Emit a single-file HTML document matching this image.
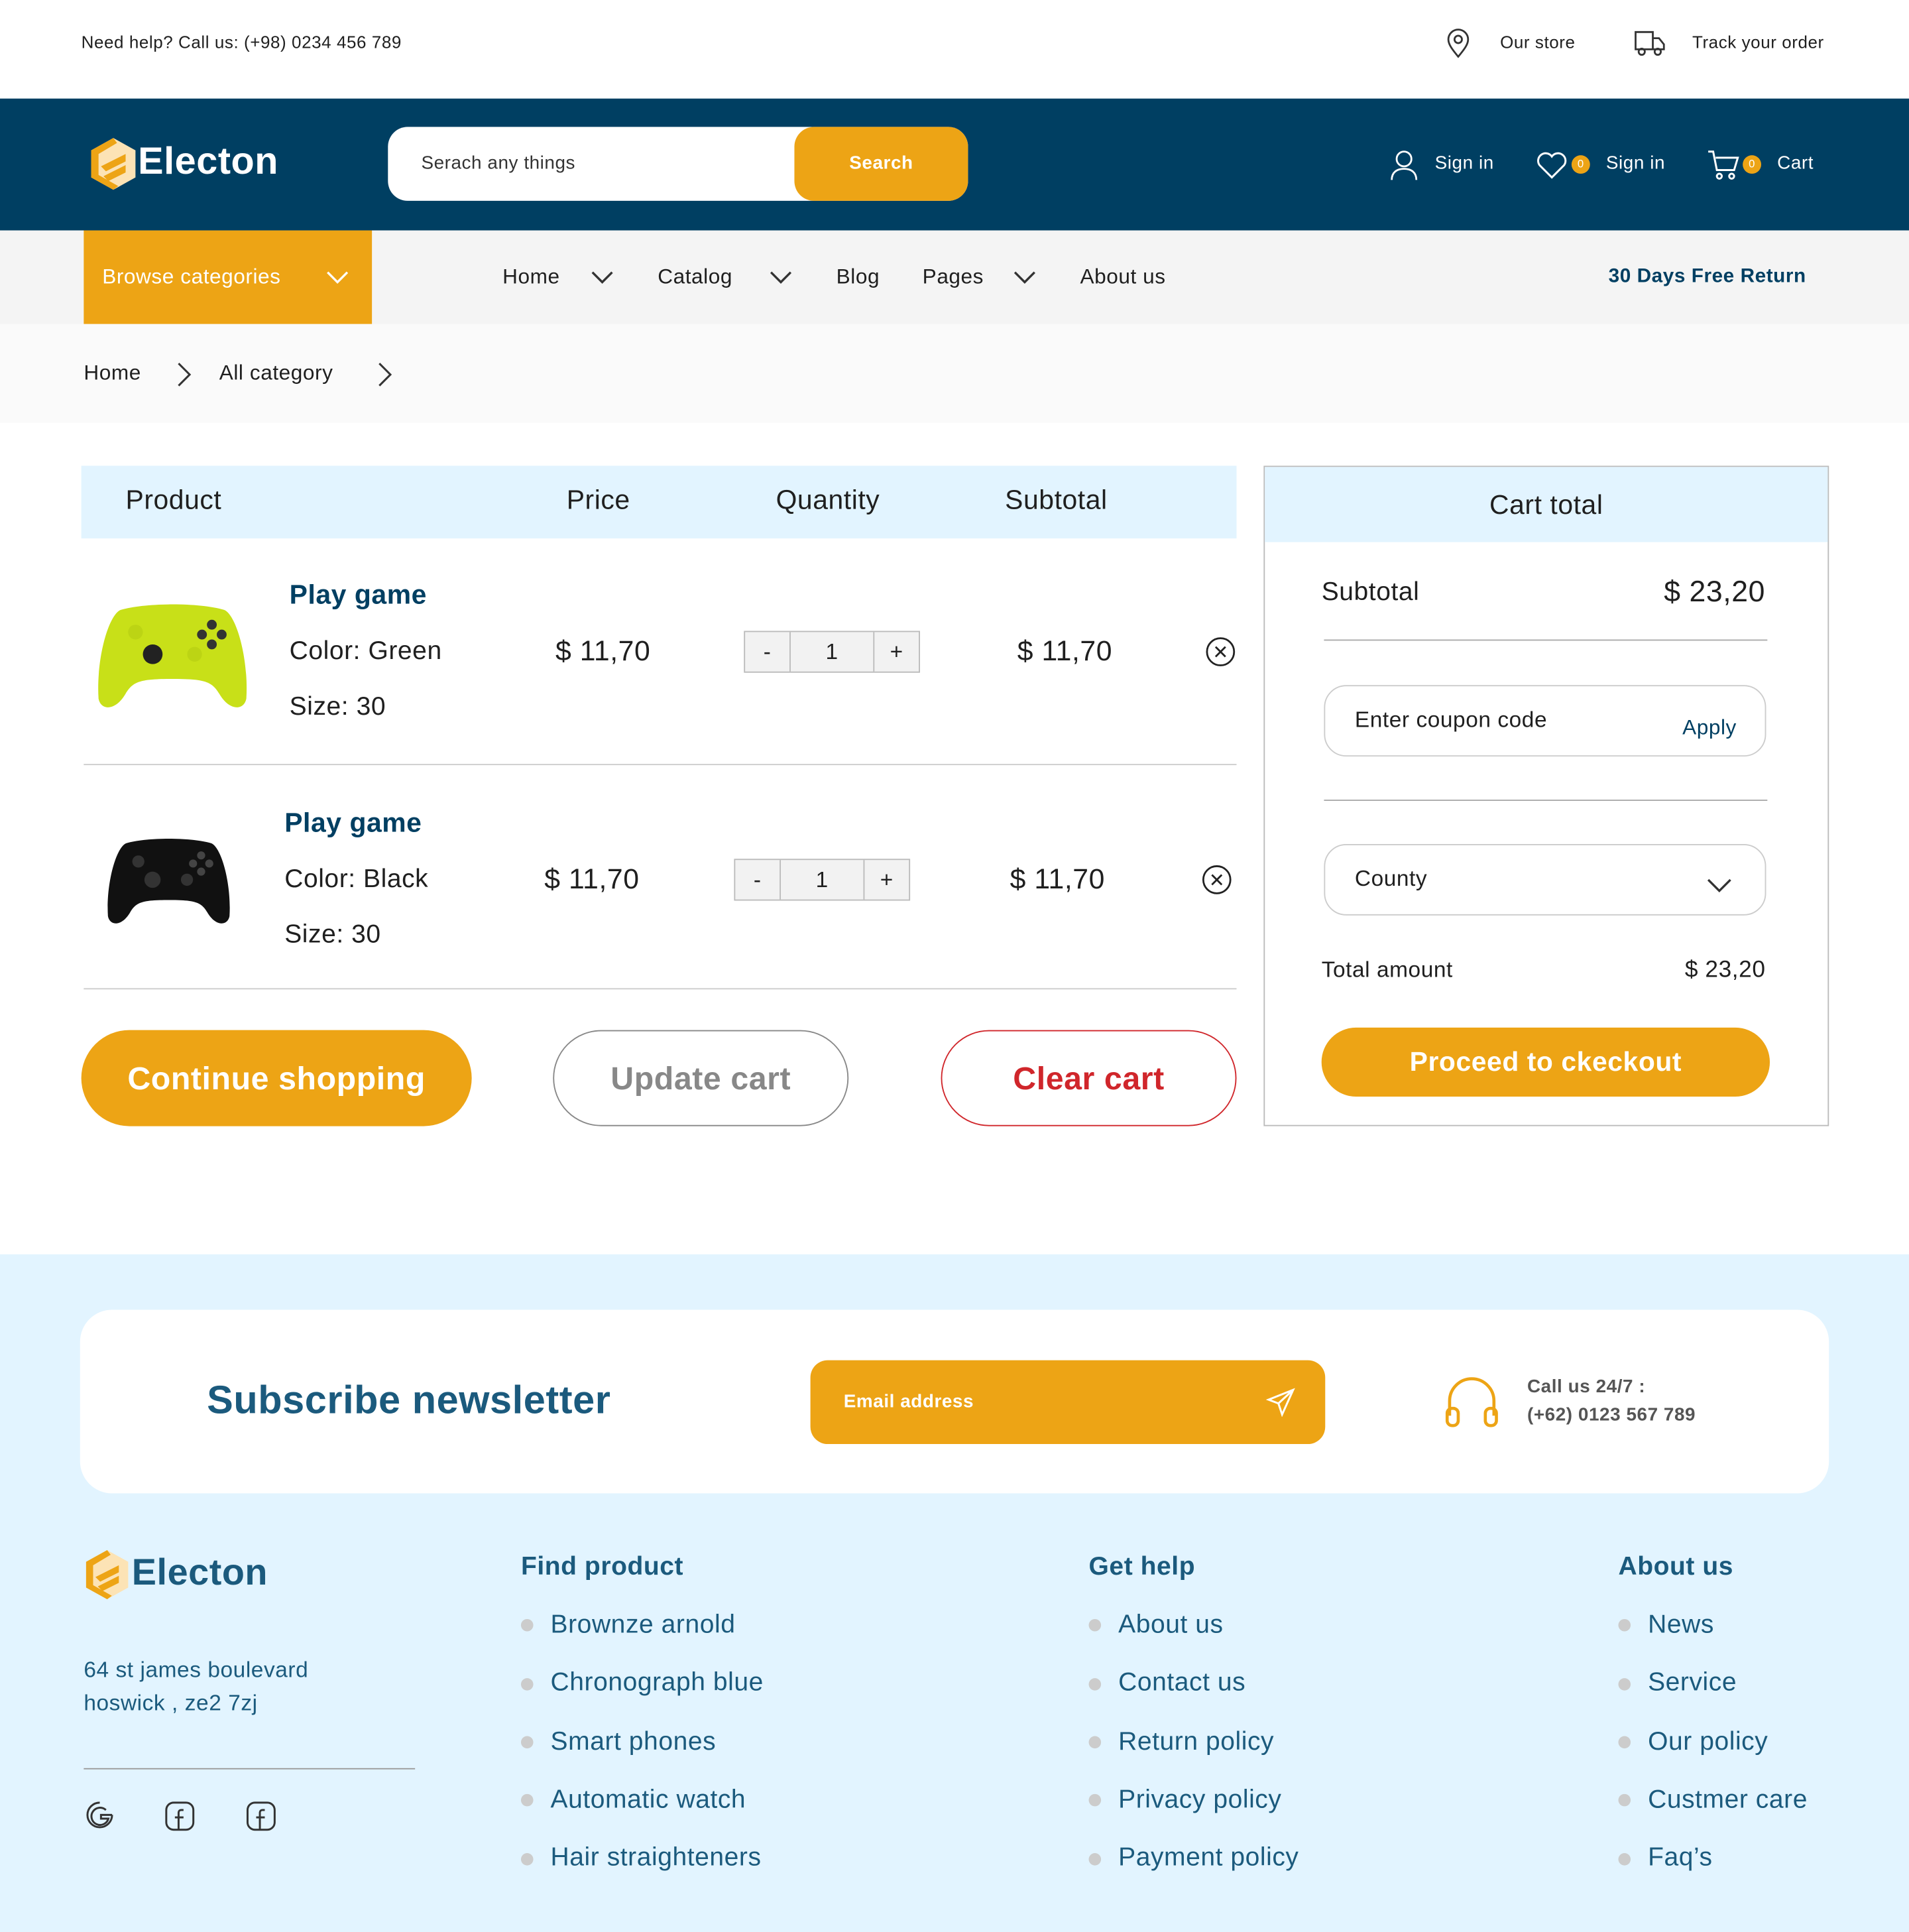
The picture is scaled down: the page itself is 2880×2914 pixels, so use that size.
<!DOCTYPE html>
<html><head><meta charset="utf-8"><style>
*{margin:0;padding:0;box-sizing:border-box}
html,body{width:2880px;height:2914px;overflow:hidden;background:#fff}
#w{position:absolute;left:0;top:0;width:1550px;height:1568px;transform:scale(1.85806,1.8584);transform-origin:0 0;font-family:"Liberation Sans",sans-serif;color:#1f1f1f;letter-spacing:0.3px}
.a{position:absolute;white-space:nowrap}
.navy{color:#003F62}
svg{position:absolute}
.d{display:inline-block;width:10px;height:10px;border-radius:50%;background:#ccc;margin-right:14px;vertical-align:middle}
</style></head><body><div id="w">
<div class="a" style="left:66px;top:26px;font-size:14px">Need help? Call us: (+98) 0234 456 789</div>
<svg style="left:1172px;top:22px" width="24" height="26" viewBox="0 0 24 26" fill="none" stroke="#333" stroke-width="1.5"><path d="M12 24c5-6 8-10 8-14a8 8 0 0 0-16 0c0 4 3 8 8 14z"/><circle cx="12" cy="10" r="3"/></svg>
<div class="a" style="left:1218px;top:26px;font-size:14px">Our store</div>
<svg style="left:1326px;top:22px" width="28" height="26" viewBox="0 0 28 26" fill="none" stroke="#333" stroke-width="1.5"><path d="M2 4h14v14H2zM16 9h5l4 5v4h-9"/><circle cx="7" cy="20" r="2.5"/><circle cx="20" cy="20" r="2.5"/></svg>
<div class="a" style="left:1374px;top:26px;font-size:14px">Track your order</div>
<div class="a" style="left:0;top:80px;width:1550px;height:107px;background:#003F62"></div>
<svg style="left:72px;top:111px" width="40" height="44" viewBox="0 0 40 44"><path d="M20 1 38 11v22L20 43 2 33V11z" fill="#FCE3B5"/><path d="M20 1 2 11v22l18 10 4-3-16-9V14l15-9z" fill="#EDA415"/><path d="M10 24 30 14v6L14 28z M12 32l18-9v6l-14 7z" fill="#EDA415"/></svg>
<div class="a" style="left:112px;top:113px;font-size:31px;font-weight:bold;color:#fff">Electon</div>
<div class="a" style="left:315px;top:103px;width:471px;height:60px;background:#fff;border-radius:16px"></div>
<div class="a" style="left:342px;top:124px;font-size:15px;color:#333">Serach any things</div>
<div class="a" style="left:645px;top:103px;width:141px;height:60px;background:#EDA415;border-radius:16px;color:#fff;font-size:15px;font-weight:bold;text-align:center;line-height:60px">Search</div>
<svg style="left:1128px;top:121px" width="24" height="26" viewBox="0 0 24 26" fill="none" stroke="#fff" stroke-width="1.5"><circle cx="12" cy="8" r="6"/><path d="M2 25c0-6 4-9 10-9s10 3 10 9"/></svg>
<div class="a" style="left:1165px;top:124px;font-size:15px;color:#fff">Sign in</div>
<svg style="left:1247px;top:122px" width="26" height="24" viewBox="0 0 26 24" fill="none" stroke="#fff" stroke-width="1.6"><path d="M13 22 3 12a5.5 5.5 0 0 1 10-7 5.5 5.5 0 0 1 10 7z"/></svg>
<div class="a" style="left:1276px;top:126px;width:15px;height:15px;border-radius:50%;background:#EDA415;color:#fff;font-size:9px;text-align:center;line-height:15px">0</div>
<div class="a" style="left:1304px;top:124px;font-size:15px;color:#fff">Sign in</div>
<svg style="left:1386px;top:121px" width="28" height="26" viewBox="0 0 28 26" fill="none" stroke="#fff" stroke-width="1.6"><path d="M1 2h4l3 15h14l3-10H7"/><circle cx="10" cy="22" r="2"/><circle cx="20" cy="22" r="2"/></svg>
<div class="a" style="left:1415px;top:126px;width:15px;height:15px;border-radius:50%;background:#EDA415;color:#fff;font-size:9px;text-align:center;line-height:15px">0</div>
<div class="a" style="left:1443px;top:124px;font-size:15px;color:#fff">Cart</div>
<div class="a" style="left:0;top:187px;width:1550px;height:76px;background:#F4F4F4"></div>
<div class="a" style="left:68px;top:187px;width:234px;height:76px;background:#EDA415"></div>
<div class="a" style="left:83px;top:215px;font-size:17px;color:#fff">Browse categories</div>
<svg style="left:264px;top:218px" width="20" height="14" viewBox="0 0 20 14" fill="none" stroke="#fff" stroke-width="1.8"><path d="M2 3l8 8 8-8"/></svg>
<div class="a" style="left:408px;top:215px;font-size:17px">Home</div>
<svg style="left:479px;top:218px" width="20" height="14" viewBox="0 0 20 14" fill="none" stroke="#333" stroke-width="1.8"><path d="M2 3l8 8 8-8"/></svg>
<div class="a" style="left:534px;top:215px;font-size:17px">Catalog</div>
<svg style="left:624px;top:218px" width="20" height="14" viewBox="0 0 20 14" fill="none" stroke="#333" stroke-width="1.8"><path d="M2 3l8 8 8-8"/></svg>
<div class="a" style="left:679px;top:215px;font-size:17px">Blog</div>
<div class="a" style="left:749px;top:215px;font-size:17px">Pages</div>
<svg style="left:822px;top:218px" width="20" height="14" viewBox="0 0 20 14" fill="none" stroke="#333" stroke-width="1.8"><path d="M2 3l8 8 8-8"/></svg>
<div class="a" style="left:877px;top:215px;font-size:17px">About us</div>
<div class="a navy" style="left:1306px;top:216px;font-size:16px;font-weight:bold">30 Days Free Return</div>
<div class="a" style="left:0;top:263px;width:1550px;height:80px;background:#FAFAFA"></div>
<div class="a" style="left:68px;top:293px;font-size:17px">Home</div>
<svg style="left:142px;top:293px" width="14" height="22" viewBox="0 0 14 22" fill="none" stroke="#333" stroke-width="1.6"><path d="M3 2l9 9-9 9"/></svg>
<div class="a" style="left:178px;top:293px;font-size:17px">All category</div>
<svg style="left:305px;top:293px" width="14" height="22" viewBox="0 0 14 22" fill="none" stroke="#333" stroke-width="1.6"><path d="M3 2l9 9-9 9"/></svg>
<div class="a" style="left:66px;top:378px;width:938px;height:59px;background:#E2F4FF"></div>
<div class="a" style="left:102px;top:393px;font-size:22px">Product</div>
<div class="a" style="left:460px;top:393px;font-size:22px">Price</div>
<div class="a" style="left:630px;top:393px;font-size:22px">Quantity</div>
<div class="a" style="left:816px;top:393px;font-size:22px">Subtotal</div>
<svg style="left:78px;top:485px" width="124" height="92" viewBox="0 0 124 92"><path d="M20 10C40 4 84 4 104 10c10 4 20 40 18 72-2 10-14 10-22-4-6-10-12-12-38-12S30 68 24 78c-8 14-20 14-22 4C0 50 10 14 20 10z" fill="#C8E018"/><circle cx="46" cy="46" r="8" fill="#222"/><circle cx="32" cy="28" r="6" fill="#BCD414"/><circle cx="80" cy="46" r="6" fill="#BCD414"/><circle cx="94" cy="22" r="4" fill="#333"/><circle cx="102" cy="30" r="4" fill="#333"/><circle cx="86" cy="30" r="4" fill="#333"/><circle cx="94" cy="38" r="4" fill="#333"/></svg>
<div class="a navy" style="left:235px;top:470px;font-size:22px;font-weight:bold">Play game</div>
<div class="a" style="left:235px;top:517px;font-size:21px">Color: Green</div>
<div class="a" style="left:235px;top:562px;font-size:21px">Size: 30</div>
<div class="a" style="left:451px;top:515px;font-size:23px">$ 11,70</div>
<div class="a" style="left:604px;top:512px;width:143px;height:34px;border:1px solid #bbb;background:#F2F2F2;display:flex;font-size:18px">
<div style="width:37px;text-align:center;line-height:32px;border-right:1px solid #bbb">-</div><div style="width:68px;text-align:center;line-height:32px;border-right:1px solid #bbb">1</div><div style="flex:1;text-align:center;line-height:32px">+</div></div>
<div class="a" style="left:826px;top:515px;font-size:23px">$ 11,70</div>
<svg style="left:979px;top:517px" width="24" height="24" viewBox="0 0 24 24" fill="none" stroke="#222" stroke-width="1.5"><circle cx="12" cy="12" r="11"/><path d="M8 8l8 8M16 8l-8 8"/></svg>
<div class="a" style="left:68px;top:620px;width:936px;height:1px;background:#ccc"></div>
<svg style="left:86px;top:676px" width="102" height="76" viewBox="0 0 124 92"><path d="M20 10C40 4 84 4 104 10c10 4 20 40 18 72-2 10-14 10-22-4-6-10-12-12-38-12S30 68 24 78c-8 14-20 14-22 4C0 50 10 14 20 10z" fill="#111"/><circle cx="46" cy="46" r="8" fill="#333"/><circle cx="32" cy="28" r="6" fill="#333"/><circle cx="80" cy="46" r="6" fill="#333"/><circle cx="94" cy="22" r="4" fill="#444"/><circle cx="102" cy="30" r="4" fill="#444"/><circle cx="86" cy="30" r="4" fill="#444"/><circle cx="94" cy="38" r="4" fill="#444"/></svg>
<div class="a navy" style="left:231px;top:655px;font-size:22px;font-weight:bold">Play game</div>
<div class="a" style="left:231px;top:702px;font-size:21px">Color: Black</div>
<div class="a" style="left:231px;top:747px;font-size:21px">Size: 30</div>
<div class="a" style="left:442px;top:700px;font-size:23px">$ 11,70</div>
<div class="a" style="left:596px;top:697px;width:143px;height:34px;border:1px solid #bbb;background:#F2F2F2;display:flex;font-size:18px">
<div style="width:37px;text-align:center;line-height:32px;border-right:1px solid #bbb">-</div><div style="width:68px;text-align:center;line-height:32px;border-right:1px solid #bbb">1</div><div style="flex:1;text-align:center;line-height:32px">+</div></div>
<div class="a" style="left:820px;top:700px;font-size:23px">$ 11,70</div>
<svg style="left:976px;top:702px" width="24" height="24" viewBox="0 0 24 24" fill="none" stroke="#222" stroke-width="1.5"><circle cx="12" cy="12" r="11"/><path d="M8 8l8 8M16 8l-8 8"/></svg>
<div class="a" style="left:68px;top:802px;width:936px;height:1px;background:#ccc"></div>
<div class="a" style="left:66px;top:836px;width:317px;height:78px;border-radius:40px;background:#EDA415;color:#fff;font-size:26px;font-weight:bold;text-align:center;line-height:78px">Continue shopping</div>
<div class="a" style="left:449px;top:836px;width:240px;height:78px;border-radius:40px;border:1px solid #888;color:#888;font-size:26px;font-weight:bold;text-align:center;line-height:76px">Update cart</div>
<div class="a" style="left:764px;top:836px;width:240px;height:78px;border-radius:40px;border:1px solid #D0262B;color:#D0262B;font-size:26px;font-weight:bold;text-align:center;line-height:76px">Clear cart</div>
<div class="a" style="left:1026px;top:378px;width:459px;height:536px;border:1px solid #bbb"></div>
<div class="a" style="left:1027px;top:379px;width:457px;height:61px;background:#E2F4FF;text-align:center;line-height:62px;font-size:22px">Cart total</div>
<div class="a" style="left:1073px;top:469px;font-size:21px">Subtotal</div>
<div class="a" style="left:1351px;top:467px;font-size:24px">$ 23,20</div>
<div class="a" style="left:1075px;top:519px;width:360px;height:1px;background:#aaa"></div>
<div class="a" style="left:1075px;top:556px;width:359px;height:58px;border:1px solid #ccc;border-radius:18px"></div>
<div class="a" style="left:1100px;top:574px;font-size:18px">Enter coupon code</div>
<div class="a navy" style="left:1366px;top:581px;font-size:17px">Apply</div>
<div class="a" style="left:1075px;top:649px;width:360px;height:1px;background:#aaa"></div>
<div class="a" style="left:1075px;top:685px;width:359px;height:58px;border:1px solid #ccc;border-radius:18px"></div>
<div class="a" style="left:1100px;top:703px;font-size:18px">County</div>
<svg style="left:1385px;top:710px" width="22" height="16" viewBox="0 0 22 16" fill="none" stroke="#333" stroke-width="1.8"><path d="M2 4l9 9 9-9"/></svg>
<div class="a" style="left:1073px;top:777px;font-size:18px">Total amount</div>
<div class="a" style="left:1368px;top:777px;font-size:19px">$ 23,20</div>
<div class="a" style="left:1073px;top:834px;width:364px;height:56px;border-radius:30px;background:#EDA415;color:#fff;font-size:22px;font-weight:bold;text-align:center;line-height:56px">Proceed to ckeckout</div>
<div class="a" style="left:0;top:1018px;width:1550px;height:550px;background:#E2F4FF"></div>
<div class="a" style="left:65px;top:1063px;width:1420px;height:149px;background:#fff;border-radius:26px"></div>
<div class="a" style="left:168px;top:1118px;font-size:32px;font-weight:bold;color:#1B5A7D">Subscribe newsletter</div>
<div class="a" style="left:658px;top:1104px;width:418px;height:68px;border-radius:14px;background:#EDA415"></div>
<div class="a" style="left:685px;top:1129px;font-size:15px;font-weight:bold;color:#fff">Email address</div>
<svg style="left:1028px;top:1126px" width="24" height="24" viewBox="0 0 24 24" fill="none" stroke="#fff" stroke-width="1.6"><path d="M22 2 2 10l8 3 3 9z M10 13l12-11"/></svg>
<svg style="left:1171px;top:1113px" width="48" height="50" viewBox="0 0 48 50" fill="none" stroke="#EDA415" stroke-width="2.5"><path d="M6 36V24a18 18 0 0 1 36 0v12"/><rect x="4" y="30" width="9" height="14" rx="4"/><rect x="35" y="30" width="9" height="14" rx="4"/></svg>
<div class="a" style="left:1240px;top:1117px;font-size:15px;font-weight:bold;color:#555">Call us 24/7 :</div>
<div class="a" style="left:1240px;top:1140px;font-size:15px;font-weight:bold;color:#555">(+62) 0123 567 789</div>
<svg style="left:68px;top:1257px" width="38" height="42" viewBox="0 0 40 44"><path d="M20 1 38 11v22L20 43 2 33V11z" fill="#FCE3B5"/><path d="M20 1 2 11v22l18 10 4-3-16-9V14l15-9z" fill="#EDA415"/><path d="M10 24 30 14v6L14 28z M12 32l18-9v6l-14 7z" fill="#EDA415"/></svg>
<div class="a" style="left:107px;top:1260px;font-size:30px;font-weight:bold;color:#1B5A7D">Electon</div>
<div class="a" style="left:68px;top:1342px;font-size:18px;color:#1B5A7D;line-height:27px">64 st james boulevard<br>hoswick , ze2 7zj</div>
<div class="a" style="left:68px;top:1435px;width:269px;height:1px;background:#999"></div>
<svg style="left:69px;top:1461px" width="160" height="26" viewBox="0 0 160 26" fill="none" stroke="#333" stroke-width="1.6"><path d="M22 12h-9v3h6a7 7 0 1 1-2-7"/><path d="M12 2a10 10 0 1 0 10 10"/><rect x="66" y="2" width="22" height="22" rx="6"/><path d="M80 8h-2a2 2 0 0 0-2 2v14M73 14h7"/><rect x="132" y="2" width="22" height="22" rx="6"/><path d="M146 8h-2a2 2 0 0 0-2 2v14M139 14h7"/></svg>
<div class="a" style="left:423px;top:1260px;font-size:21px;font-weight:bold;color:#1B5A7D">Find product</div>
<div class="a" style="left:884px;top:1260px;font-size:21px;font-weight:bold;color:#1B5A7D">Get help</div>
<div class="a" style="left:1314px;top:1260px;font-size:21px;font-weight:bold;color:#1B5A7D">About us</div>
<div class="a" style="left:423px;top:1295px;font-size:21px;color:#1B5A7D;line-height:47.3px">
<div><span class="d"></span>Brownze arnold</div>
<div><span class="d"></span>Chronograph blue</div>
<div><span class="d"></span>Smart phones</div>
<div><span class="d"></span>Automatic watch</div>
<div><span class="d"></span>Hair straighteners</div></div>
<div class="a" style="left:884px;top:1295px;font-size:21px;color:#1B5A7D;line-height:47.3px">
<div><span class="d"></span>About us</div>
<div><span class="d"></span>Contact us</div>
<div><span class="d"></span>Return policy</div>
<div><span class="d"></span>Privacy policy</div>
<div><span class="d"></span>Payment policy</div></div>
<div class="a" style="left:1314px;top:1295px;font-size:21px;color:#1B5A7D;line-height:47.3px">
<div><span class="d"></span>News</div>
<div><span class="d"></span>Service</div>
<div><span class="d"></span>Our policy</div>
<div><span class="d"></span>Custmer care</div>
<div><span class="d"></span>Faq’s</div></div>
</div></body></html>
